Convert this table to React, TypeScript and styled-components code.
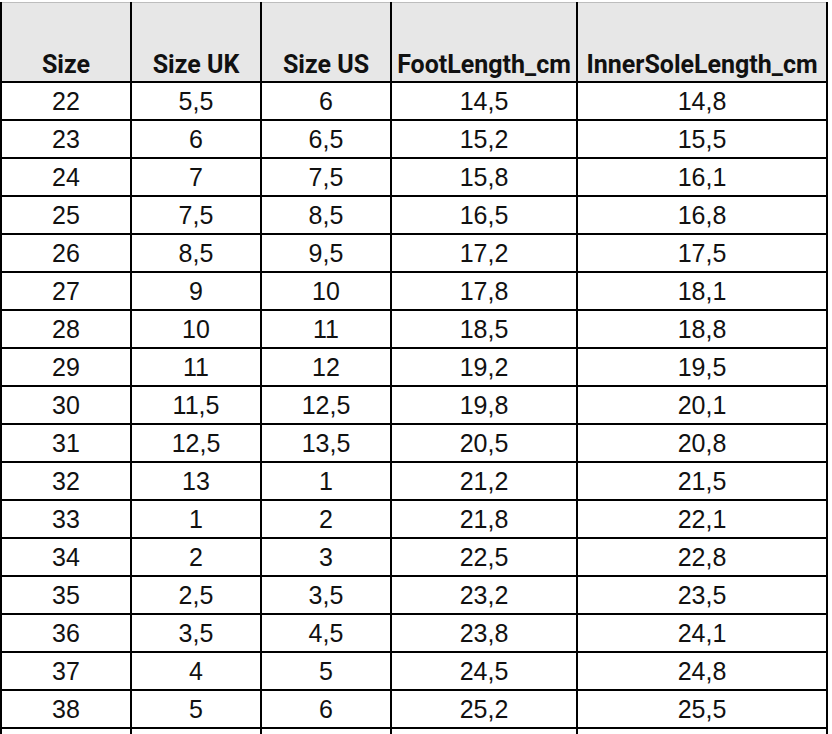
import React, { FC } from 'react';
import styled, { createGlobalStyle } from 'styled-components';

const GlobalStyle = createGlobalStyle`
    html, body {
        margin: 0;
        padding: 0;
        background: #ffffff;
    }
`;

interface ISizeRow {
    size: string;
    uk: string;
    us: string;
    foot: string;
    inner: string;
}

const rows: ISizeRow[] = [
    { size: '22', uk: '5,5', us: '6', foot: '14,5', inner: '14,8' },
    { size: '23', uk: '6', us: '6,5', foot: '15,2', inner: '15,5' },
    { size: '24', uk: '7', us: '7,5', foot: '15,8', inner: '16,1' },
    { size: '25', uk: '7,5', us: '8,5', foot: '16,5', inner: '16,8' },
    { size: '26', uk: '8,5', us: '9,5', foot: '17,2', inner: '17,5' },
    { size: '27', uk: '9', us: '10', foot: '17,8', inner: '18,1' },
    { size: '28', uk: '10', us: '11', foot: '18,5', inner: '18,8' },
    { size: '29', uk: '11', us: '12', foot: '19,2', inner: '19,5' },
    { size: '30', uk: '11,5', us: '12,5', foot: '19,8', inner: '20,1' },
    { size: '31', uk: '12,5', us: '13,5', foot: '20,5', inner: '20,8' },
    { size: '32', uk: '13', us: '1', foot: '21,2', inner: '21,5' },
    { size: '33', uk: '1', us: '2', foot: '21,8', inner: '22,1' },
    { size: '34', uk: '2', us: '3', foot: '22,5', inner: '22,8' },
    { size: '35', uk: '2,5', us: '3,5', foot: '23,2', inner: '23,5' },
    { size: '36', uk: '3,5', us: '4,5', foot: '23,8', inner: '24,1' },
    { size: '37', uk: '4', us: '5', foot: '24,5', inner: '24,8' },
    { size: '38', uk: '5', us: '6', foot: '25,2', inner: '25,5' },
];

const columns = [
    { key: 'size', title: 'Size', width: 130 },
    { key: 'uk', title: 'Size UK', width: 130 },
    { key: 'us', title: 'Size US', width: 130 },
    { key: 'foot', title: 'FootLength_cm', width: 186 },
    { key: 'inner', title: 'InnerSoleLength_cm', width: 250 },
] as const;

const App: FC = () => {
    return (
        <Sheet>
            <GlobalStyle />
            <SizeTable>
                <colgroup>
                    {columns.map((c) => (
                        <col key={c.key} style={{ width: c.width }} />
                    ))}
                </colgroup>
                <thead>
                    <tr>
                        {columns.map((c) => (
                            <HeadCell key={c.key}>{c.title}</HeadCell>
                        ))}
                    </tr>
                </thead>
                <tbody>
                    {rows.map((r) => (
                        <tr key={r.size}>
                            {columns.map((c) => (
                                <Cell key={c.key}>{r[c.key]}</Cell>
                            ))}
                        </tr>
                    ))}
                    <tr>
                        {columns.map((c) => (
                            <Cell key={c.key} />
                        ))}
                    </tr>
                </tbody>
            </SizeTable>
        </Sheet>
    );
};

export default App;

const Sheet = styled.div`
    width: 832px;
    height: 734px;
    overflow: hidden;
    padding-top: 2px;
    box-sizing: border-box;
    background: #ffffff;
`;

const SizeTable = styled.table`
    border-collapse: collapse;
    table-layout: fixed;
    width: 827px;
    margin-left: 0;
    border-top: 1px solid #bdbdbd;
`;

const HeadCell = styled.th`
    height: 76px;
    padding: 0 0 2px;
    vertical-align: bottom;
    background: #e7e7e7;
    border-left: 2px solid #000;
    border-right: 2px solid #000;
    border-bottom: 2px solid #000;
    border-top: 1px solid #bdbdbd;
    font-family: 'Roboto', 'Liberation Sans', sans-serif;
    font-weight: 700;
    font-size: 25px;
    letter-spacing: 0;
    color: #111;
    text-align: center;
    white-space: nowrap;
`;

const Cell = styled.td`
    height: 36px;
    padding: 0;
    border: 2px solid #000;
    font-family: 'Liberation Sans', Arial, sans-serif;
    font-size: 25px;
    color: #111;
    text-align: center;
    vertical-align: middle;
    white-space: nowrap;
`;
